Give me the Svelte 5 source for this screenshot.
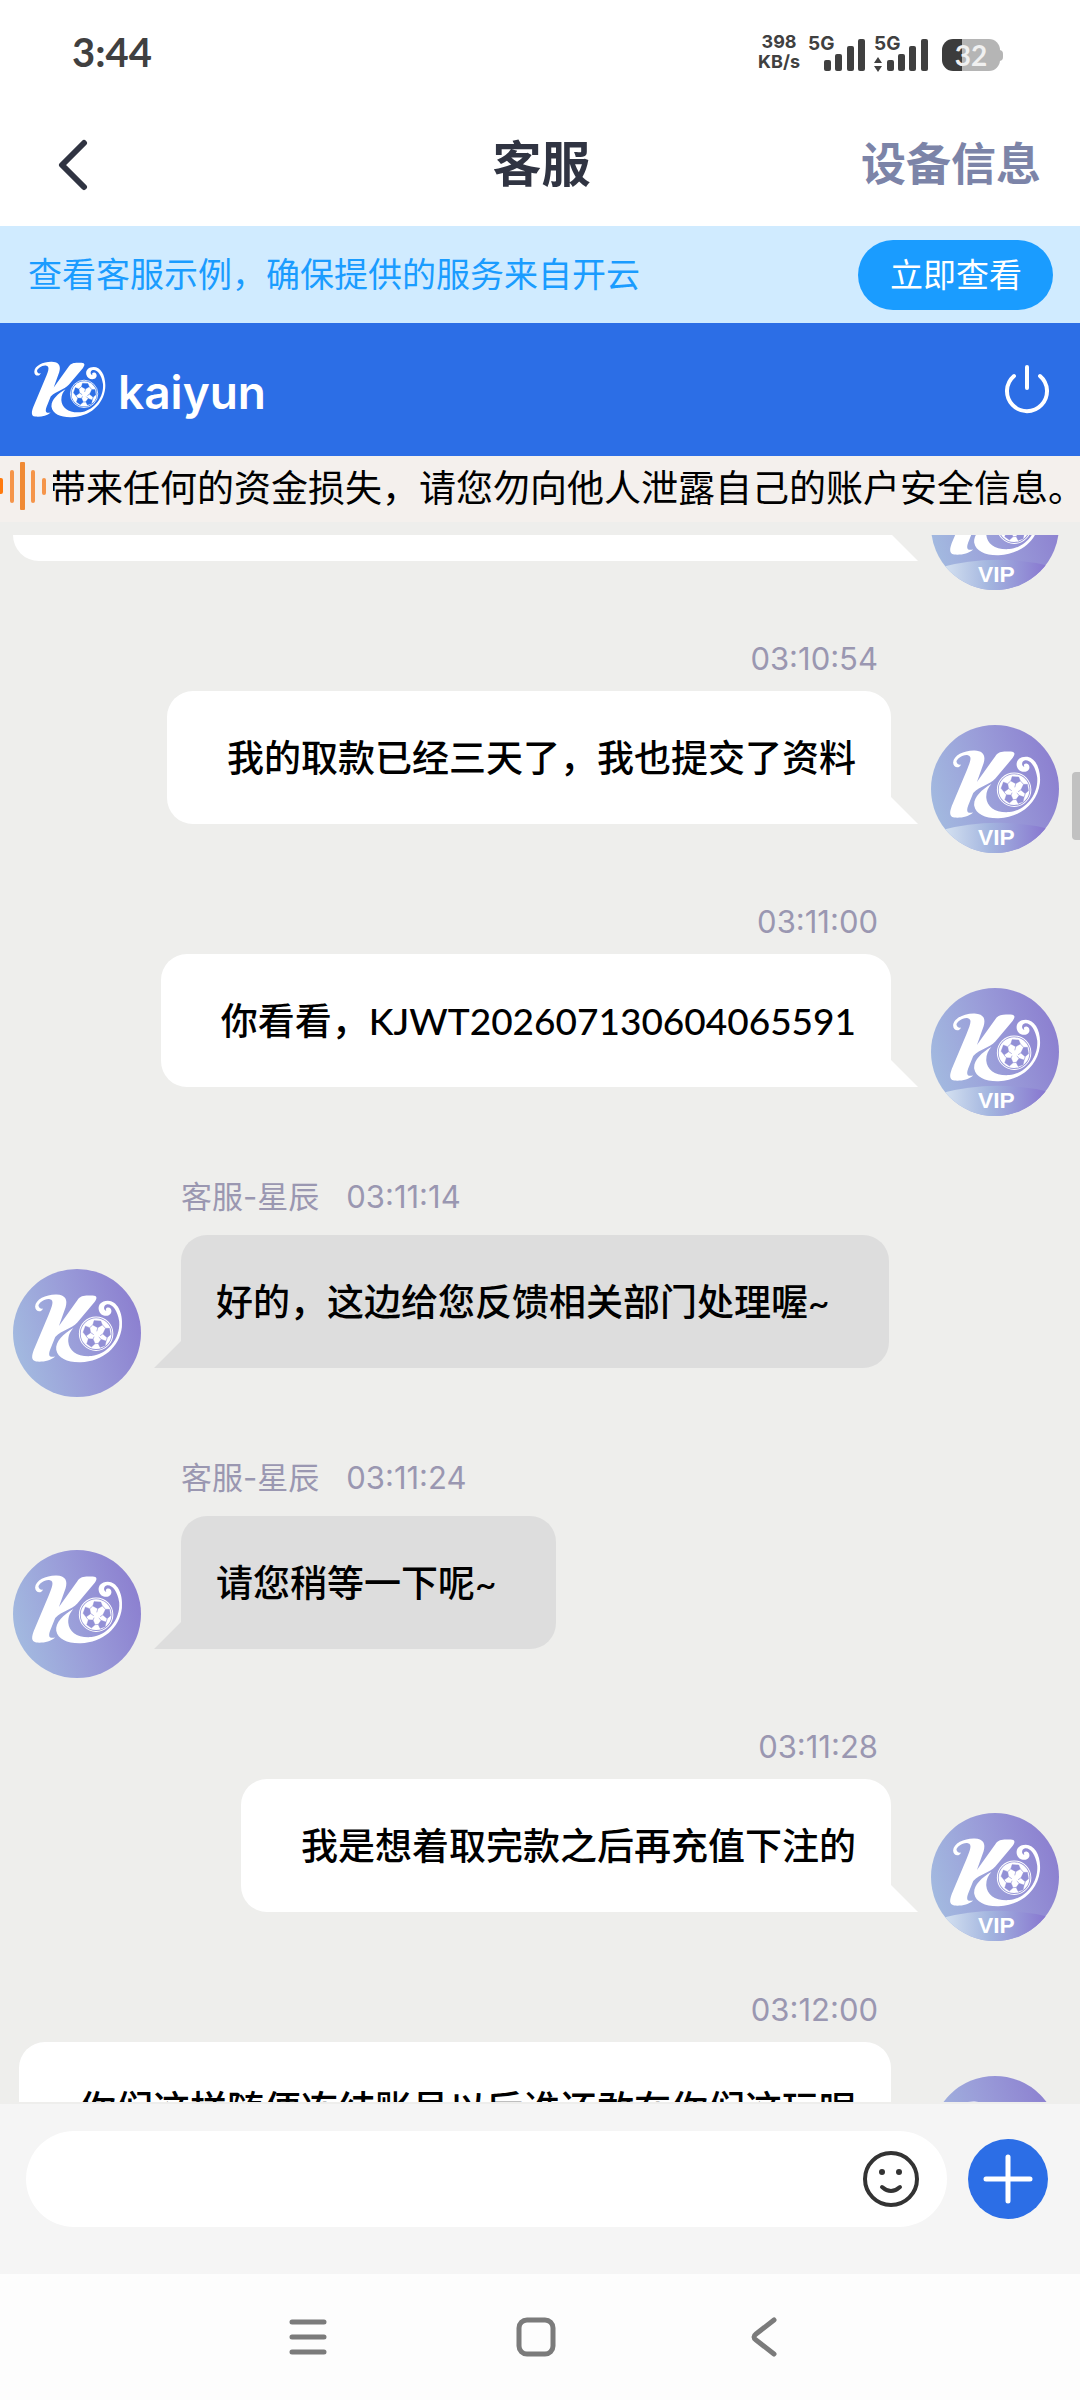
<script lang="ts">
  type Message = { from: 'user' | 'agent'; time: string; text: string; name?: string };

  const messages: Message[] = [
    { from: 'user', time: '', text: '' },
    { from: 'user', time: '03:10:54', text: '我的取款已经三天了，我也提交了资料' },
    { from: 'user', time: '03:11:00', text: '你看看，KJWT202607130604065591' },
    { from: 'agent', name: '客服-星辰', time: '03:11:14', text: '好的，这边给您反馈相关部门处理喔~' },
    { from: 'agent', name: '客服-星辰', time: '03:11:24', text: '请您稍等一下呢~' },
    { from: 'user', time: '03:11:28', text: '我是想着取完款之后再充值下注的' },
    { from: 'user', time: '03:12:00', text: '你们这样随便冻结账号以后谁还敢在你们这玩呢' }
  ];

  let draft = $state('');

  // Opens the history part-way through the oldest loaded message.
  function startAt(node: HTMLElement, top: number) {
    node.scrollTop = top;
  }
</script>

{#snippet mark(patch: string)}
  <path fill="#fff" d="M124 164 C120 178 100 176 100 159 C101 137 134 122 164 123 C190 124 198 138 191 161 L171 217 L226 140 C234 128 244 126 258 126 L272 126 C285 127 286 133 278 145 L226 207 C208 226 181 229 160 250 L145 287 C138 306 143 312 160 308 C146 321 122 325 103 323 C87 320 90 306 96 289 L140 184 C151 157 158 140 144 137 C129 134 110 149 110 157 C112 165 120 168 124 164 Z" />
  <path fill="#fff" d="M214 223 C184 240 160 264 163 288 C168 314 197 326 236 325 C302 323 352 280 359 220 C363 176 344 142 317 142 C297 142 287 155 290 169 C293 184 309 190 320 185 C332 179 329 163 319 162 C312 161 309 168 313 172 C303 170 304 156 313 153 C328 149 346 168 351 204 C355 256 314 303 268 307 C226 310 201 291 199 264 C198 247 204 234 214 223 Z" />
  <circle cx="282" cy="240" r="50" fill="none" stroke="#fff" stroke-width="3" />
  <circle cx="282" cy="240" r="46" fill="#fff" />
  <g fill={patch} stroke={patch} stroke-width="1" stroke-linejoin="round">
    <path d="M276 201 L296 202 L301 214 L287 222 L272 214 Z" />
    <path d="M250 217 L263 222 L266 237 L252 247 L243 236 Z" />
    <path d="M310 224 L322 224 L325 243 L315 252 L302 241 Z" />
    <path d="M259 255 L273 256 L279 270 L268 280 L254 270 Z" />
    <path d="M297 257 L312 262 L309 276 L294 281 L288 269 Z" />
    <path fill="none" stroke-width="2" d="M287 222 L284 233 M266 237 L275 243 M302 241 L294 246 M273 256 L276 249 M297 257 L290 250 M272 214 L263 222 M301 214 L310 224 M252 247 L259 255 M315 252 L312 262 M279 270 L288 269" />
  </g>
{/snippet}

{#snippet avatar(vip: boolean)}
  <svg class="avatar" viewBox="34 47 382 382" role="img" aria-label="kaiyun">
    <defs>
      <linearGradient id="disc" x1="0" y1="0.7" x2="1" y2="0.4">
        <stop offset="0" stop-color="#a3bbe0" />
        <stop offset="0.5" stop-color="#9a9dd9" />
        <stop offset="1" stop-color="#8c80d0" />
      </linearGradient>
      <linearGradient id="band" x1="0" y1="0" x2="1" y2="0">
        <stop offset="0.05" stop-color="#d3e0f0" />
        <stop offset="0.45" stop-color="#a3b5df" />
        <stop offset="1" stop-color="#8672cf" />
      </linearGradient>
      <clipPath id="round"><circle cx="225" cy="238" r="191" /></clipPath>
    </defs>
    <circle cx="225" cy="238" r="191" fill="url(#disc)" />
    {@render mark('#9290d6')}
    {#if vip}
      <path clip-path="url(#round)" fill="url(#band)" d="M60 362 Q225 318 390 358 V440 H60 Z" />
      <text class="vip" x="229" y="406" text-anchor="middle">VIP</text>
    {/if}
  </svg>
{/snippet}

<div class="app">
  <div class="status">
    <span class="clock">3:44</span>
    <div class="indicators">
      <div class="speed"><span>398</span><span>KB/s</span></div>
      <div class="signal">
        <span>5G</span>
        <svg viewBox="0 0 42 34" width="42" height="34" fill="#404040">
          <rect x="0" y="22" width="7" height="11" rx="2" /><rect x="11" y="16" width="7" height="17" rx="2" />
          <rect x="23" y="8" width="7" height="25" rx="2" /><rect x="34" y="1" width="7" height="32" rx="2" />
        </svg>
      </div>
      <div class="signal">
        <span>5G</span>
        <svg viewBox="0 0 54 34" width="54" height="34" fill="#404040">
          <path d="M4 19 L8 25 H0 Z M4 34 L8 28 H0 Z" />
          <rect x="13" y="22" width="7" height="11" rx="2" /><rect x="24" y="16" width="7" height="17" rx="2" />
          <rect x="35" y="8" width="7" height="25" rx="2" /><rect x="47" y="1" width="7" height="32" rx="2" />
        </svg>
      </div>
      <div class="battery"><span>32</span></div>
    </div>
  </div>

  <header class="titlebar">
    <button class="back" aria-label="返回">
      <svg viewBox="0 0 30 52" width="30" height="52"><path d="M26 4 L4 26 L26 48" fill="none" stroke="#303442" stroke-width="6" stroke-linecap="round" stroke-linejoin="round" /></svg>
    </button>
    <h1>客服</h1>
    <a class="device" href="#device">设备信息</a>
  </header>

  <section class="notice">
    <p>查看客服示例，确保提供的服务来自开云</p>
    <button>立即查看</button>
  </section>

  <section class="brand">
    <div class="logo">
      <svg viewBox="88 120 274 208" width="75" height="57" aria-hidden="true">{@render mark('#2c6ee6')}</svg>
      <span>kaiyun</span>
    </div>
    <button class="power" aria-label="结束会话">
      <svg viewBox="0 0 48 52" width="48" height="52" fill="none" stroke="#fff" stroke-width="4" stroke-linecap="round">
        <path d="M24 3 V24" /><path d="M11 12 A20 20 0 1 0 37 12" />
      </svg>
    </button>
  </section>

  <section class="marquee">
    <svg viewBox="0 0 46 48" width="46" height="48" aria-hidden="true">
      <rect x="-2" y="16" width="5" height="16" rx="2" fill="#ff7a0d" />
      <g fill="#f5954a">
        <rect x="10" y="8" width="4" height="33" rx="2" /><rect x="20" y="0" width="5" height="48" rx="1" fill="#f08a34" />
        <rect x="31" y="8" width="4" height="33" rx="2" /><rect x="42" y="16" width="4" height="17" rx="2" />
      </g>
    </svg>
    <div class="track"><p>带来任何的资金损失，请您勿向他人泄露自己的账户安全信息。</p></div>
  </section>

  <main class="chat">
    <div class="scroll" use:startAt={208}>
      {#each messages as m}
        <article class="msg {m.from}">
          <div class="meta">
            {#if m.name}<span>{m.name}</span>{/if}
            <time>{m.time}</time>
          </div>
          <div class="row">
            {#if m.from === 'agent'}{@render avatar(false)}{/if}
            <p class="bubble" class:full={!m.text}>{m.text}</p>
            {#if m.from === 'user'}{@render avatar(true)}{/if}
          </div>
        </article>
      {/each}
    </div>
    <div class="thumb"></div>
  </main>

  <form class="composer">
    <div class="field">
      <input type="text" aria-label="输入消息" bind:value={draft} />
      <button type="button" aria-label="表情">
        <svg viewBox="0 0 58 58" width="58" height="58">
          <circle cx="29" cy="29" r="26" fill="none" stroke="#333" stroke-width="4" />
          <circle cx="20" cy="22" r="3" fill="#333" /><circle cx="37" cy="22" r="3" fill="#333" />
          <path d="M20 37 Q29 45 38 37" fill="none" stroke="#333" stroke-width="4" stroke-linecap="round" />
        </svg>
      </button>
    </div>
    <button type="button" class="add" aria-label="更多">
      <svg viewBox="0 0 80 80" width="80" height="80"><path d="M40 18 V62 M18 40 H62" stroke="#fff" stroke-width="5" stroke-linecap="round" /></svg>
    </button>
  </form>

  <nav class="system">
    <button aria-label="菜单"><svg viewBox="0 0 40 40" width="40" height="40"><path d="M4 5 H36 M4 20 H36 M4 35 H36" stroke="#7b7b7b" stroke-width="5" stroke-linecap="round" /></svg></button>
    <button aria-label="主页"><svg viewBox="0 0 40 40" width="40" height="40"><rect x="3" y="3" width="34" height="34" rx="8" fill="none" stroke="#7b7b7b" stroke-width="5" /></svg></button>
    <button aria-label="后退"><svg viewBox="0 0 40 40" width="40" height="40"><path d="M30 3 L12 17 Q8 20 12 23 L30 37" fill="none" stroke="#7b7b7b" stroke-width="5" stroke-linecap="round" /></svg></button>
  </nav>
</div>

<style>
  :global(body) { margin: 0; background: #fff; }
  .app {
    display: flex;
    flex-direction: column;
    height: 100vh;
    overflow: hidden;
    background: #fff;
    font-family: Inter, "Noto Sans CJK SC", sans-serif;
  }
  .app * { box-sizing: border-box; }
  h1, p { margin: 0; }
  button { border: 0; padding: 0; background: none; font: inherit; color: inherit; cursor: pointer; }
  svg { display: block; flex: none; }

  .status {
    flex: none;
    height: 104px;
    padding: 0 76px 0 72px;
    display: flex;
    align-items: center;
    justify-content: space-between;
    color: #404040;
    font-weight: 700;
  }
  .clock { font-family: Lato, sans-serif; font-size: 40px; line-height: 48px; }
  .indicators { display: flex; align-items: flex-end; gap: 8px; }
  .speed { display: flex; flex-direction: column; align-items: center; font-size: 18px; line-height: 20px; }
  .signal { display: flex; align-items: flex-end; height: 38px; }
  .signal span { align-self: flex-start; width: 16px; white-space: nowrap; font-size: 19px; line-height: 20px; }
  .signal + .signal span { width: 0; }
  .battery {
    width: 58px;
    height: 32px;
    margin: 0 4px 1px 6px;
    border-radius: 11px;
    background: linear-gradient(90deg, #3c3c3c 20px, #b5b5b5 20px);
    position: relative;
    color: #f0f0f0;
    font-family: Lato, sans-serif;
    font-size: 28px;
    line-height: 32px;
    text-align: center;
  }
  .battery::after {
    content: "";
    position: absolute;
    right: -3px;
    top: 11px;
    width: 4px;
    height: 11px;
    border-radius: 0 4px 4px 0;
    background: #b5b5b5;
  }

  .titlebar {
    flex: none;
    height: 122px;
    padding: 0 39px 0 58px;
    display: grid;
    grid-template-columns: 1fr auto 1fr;
    align-items: center;
    color: #303442;
  }
  .back { justify-self: start; }
  h1 { padding-right: 16px; font-size: 49px; line-height: 64px; font-weight: 700; }
  .device { justify-self: end; color: #7c84a8; font-size: 45px; line-height: 64px; font-weight: 700; text-decoration: none; }

  .notice {
    flex: none;
    height: 97px;
    padding: 0 27px 0 28px;
    display: flex;
    align-items: center;
    justify-content: space-between;
    background: #d0ebff;
    color: #1a9cff;
    font-size: 34px;
  }
  .notice p { padding-bottom: 4px; }
  .notice button {
    height: 70px;
    padding: 0 31px 4px 32px;
    border-radius: 35px;
    background: #1a9cff;
    color: #fff;
    font-size: 33px;
  }

  .brand {
    flex: none;
    height: 133px;
    padding: 0 29px 0 31px;
    display: flex;
    align-items: center;
    justify-content: space-between;
    background: #2c6ee6;
    color: #fff;
  }
  .logo { display: flex; align-items: center; gap: 12px; font-size: 46px; line-height: 56px; font-weight: 600; }
  .logo span { padding-top: 4px; }

  .marquee {
    flex: none;
    height: 66px;
    padding-bottom: 7px;
    display: flex;
    align-items: center;
    gap: 7px;
    background: #f4f0ed;
    color: #000;
    font-size: 37px;
    line-height: 52px;
  }
  .track { flex: 1; min-width: 0; padding-top: 6px; overflow: hidden; }
  .track p { margin-left: -4px; white-space: nowrap; }

  .chat {
    flex: 1;
    min-height: 0;
    padding: 13px 0 2px;
    display: flex;
    position: relative;
    background: #eeeeec;
  }
  .scroll { flex: 1; overflow-y: auto; scrollbar-width: none; }
  .thumb {
    position: absolute;
    right: 0;
    top: 250px;
    width: 8px;
    height: 68px;
    border-radius: 4px 0 0 4px;
    background: #c1c1c1;
  }
  .msg { display: flex; flex-direction: column; }
  .user { padding: 47px 21px 0 13px; }
  .agent { padding: 59px 21px 0 13px; }
  .meta { height: 44px; display: flex; gap: 27px; color: #9a97b1; font-size: 31px; line-height: 44px; }
  .user .meta { justify-content: flex-end; margin-bottom: 10px; padding-right: 181px; }
  .agent .meta { margin-bottom: 16px; padding-left: 168px; }
  .row { display: flex; gap: 40px; }
  .user .row { justify-content: flex-end; }
  .avatar { width: 128px; height: 128px; margin-top: 34px; }
  .vip { font: 700 68px "Liberation Sans", sans-serif; fill: #fff; }
  .bubble {
    position: relative;
    height: 133px;
    border-radius: 26px;
    font-family: Lato, "Noto Sans CJK SC", sans-serif;
    font-size: 37px;
    line-height: 133px;
    font-weight: 500;
    color: #000;
    white-space: nowrap;
  }
  .full { flex: 1; }
  .user .bubble { padding: 0 35px 0 60px; background: #fff; border-bottom-right-radius: 0; }
  .agent .bubble { padding: 0 60px 0 35px; background: #ddd; border-bottom-left-radius: 0; }
  .bubble::after {
    content: "";
    position: absolute;
    bottom: 0;
    width: 27px;
    height: 27px;
  }
  .user .bubble::after { left: 100%; background: #fff; clip-path: polygon(0 0, 100% 100%, 0 100%); }
  .agent .bubble::after { right: 100%; background: #ddd; clip-path: polygon(100% 0, 100% 100%, 0 100%); }

  .composer {
    flex: none;
    padding: 27px 32px 47px 26px;
    display: flex;
    align-items: center;
    gap: 21px;
    background: #f5f5f5;
  }
  .field {
    flex: 1;
    height: 96px;
    padding: 0 27px 0 40px;
    display: flex;
    align-items: center;
    border-radius: 48px;
    background: #fff;
  }
  .field input { flex: 1; min-width: 0; height: 60px; border: 0; outline: 0; background: none; font: inherit; font-size: 37px; }
  .add { border-radius: 50%; background: #2c6ee6; }

  .system {
    flex: none;
    height: 126px;
    padding-right: 8px;
    display: flex;
    align-items: center;
    justify-content: center;
    gap: 188px;
    background: #fdfdfd;
  }
</style>
